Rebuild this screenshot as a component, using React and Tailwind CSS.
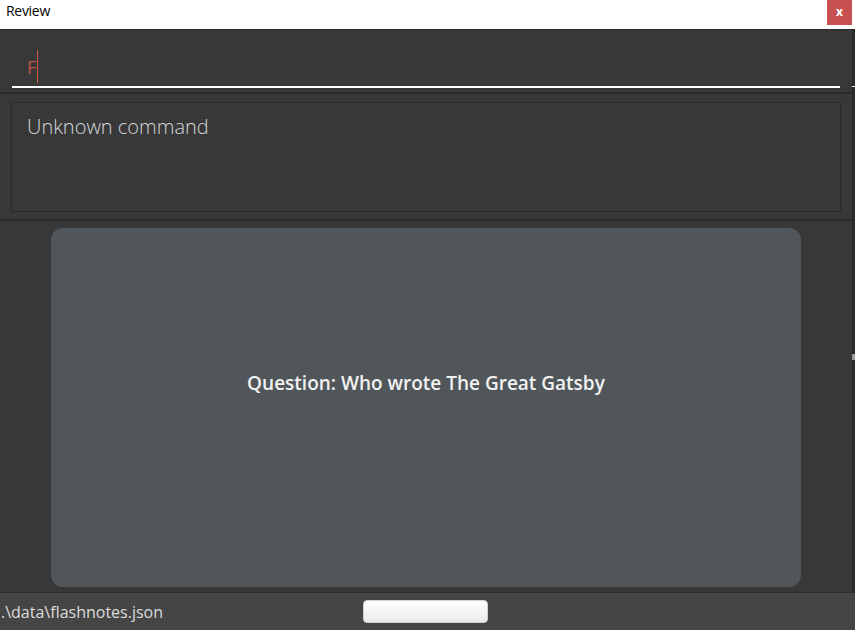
import React from 'react';

const font = { fontFamily: '"Open Sans", "Noto Sans", sans-serif' };

const App = () => {
  return (
    <div className="w-[855px] h-[630px] flex flex-col bg-[#383838] overflow-hidden" style={font}>
      {/* title bar */}
      <div className="h-[30px] bg-white flex items-start justify-between border-b border-[#2a2a2a]">
        <span className="pl-[6px] pt-[2px] text-[14px] leading-[18px] text-black tracking-[-0.3px]">Review</span>
        <div className="w-[25px] h-[25px] mr-[3px] bg-[#c75050] flex items-center justify-center text-white text-[12px] font-bold leading-none pb-[2px]">
          x
        </div>
      </div>

      <div className="flex flex-1">
        <div className="w-[852px] flex flex-col">
          {/* command box */}
          <div className="h-[64px] px-[12px] pt-[16px] border-b-2 border-[#2c2c2c]">
            <div className="h-[42px] flex items-center border-b-2 border-white pl-[15px]">
              <span className="text-[#c0564a] text-[18px] leading-none mt-[2px]">F</span>
              <span className="w-[1px] h-[33px] bg-[#d45a48] ml-[1px]"></span>
            </div>
          </div>

          {/* result box */}
          <div className="h-[127px] px-[11px] pt-[8px] pb-[7px] border-b-2 border-[#2c2c2c]">
            <div className="h-full border border-[#2a2a2a] px-[15px] pt-[12px]">
              <span className="text-[20px] leading-[24px] text-[#d3d6da] font-light">Unknown command</span>
            </div>
          </div>

          {/* card */}
          <div className="flex-1 flex justify-center pt-[7px] pb-[5px]">
            <div className="w-[750px] h-full rounded-[12px] bg-[#50565a] flex items-center justify-center">
              <span className="text-[19px] font-semibold text-[#f2f2f2] mb-[48px]">Question: Who wrote The Great Gatsby</span>
            </div>
          </div>
        </div>
        <div className="w-[3px] bg-[#2b2b2b] flex flex-col">
          <div className="h-[56px]"></div>
          <div className="h-[1px] bg-white"></div>
          <div className="h-[267px]"></div>
          <div className="h-[6px] bg-[#9a9a9a]"></div>
        </div>
      </div>

      {/* status bar */}
      <div className="h-[38px] bg-[#454545] border-t border-[#2e2e2e] flex items-center">
        <span className="w-[363px] pl-[1px] text-[16px] text-[#dcdcdc] leading-none">.\data\flashnotes.json</span>
        <div className="w-[125px] h-[23px] rounded-[4px] bg-gradient-to-b from-[#ffffff] to-[#ebebeb] border border-[#d0d0d0]"></div>
      </div>
    </div>
  );
};

export default App;
